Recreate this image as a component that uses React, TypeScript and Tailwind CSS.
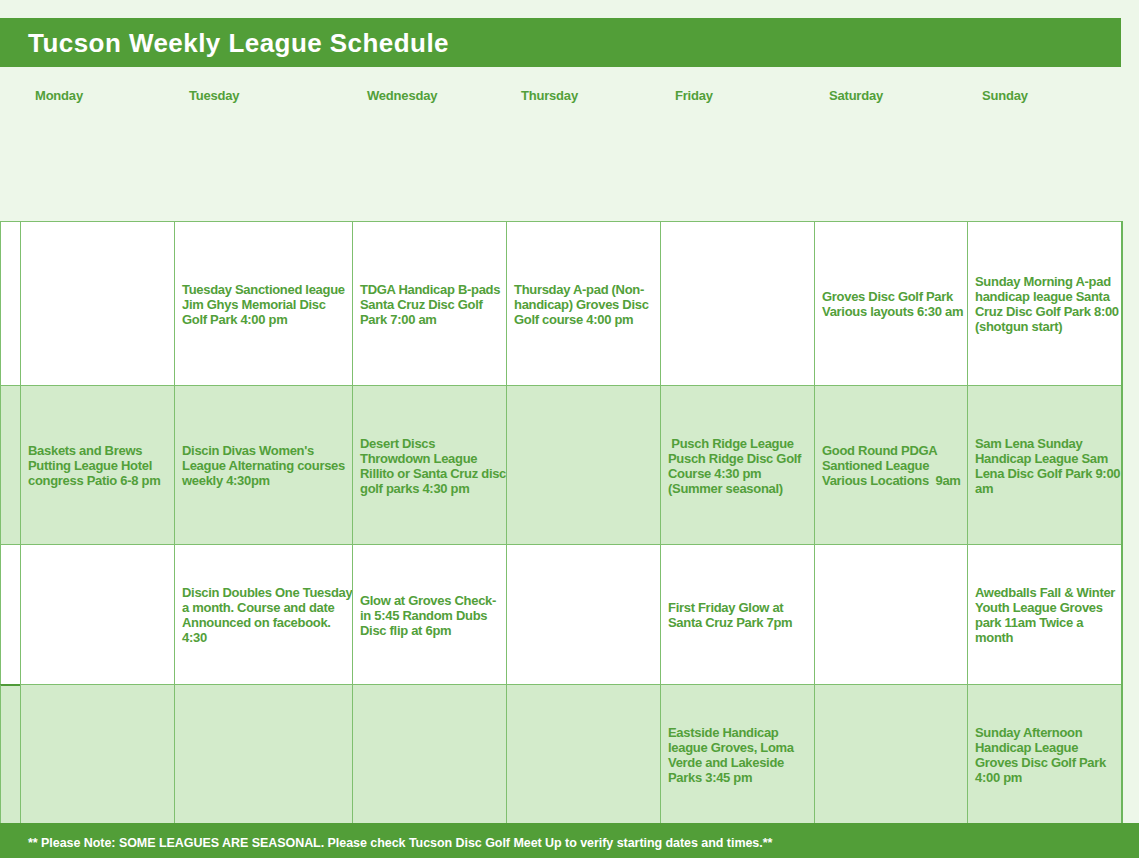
const days = ["Monday", "Tuesday", "Wednesday", "Thursday", "Friday", "Saturday", "Sunday"];

// first column is the narrow blank strip on the left
const rows: { bg: string; h: string; cells: string[] }[] = [
  {
    bg: "bg-white",
    h: "h-[164px]",
    cells: [
      "",
      "",
      "Tuesday Sanctioned league\nJim Ghys Memorial Disc\nGolf Park 4:00 pm",
      "TDGA Handicap B-pads\nSanta Cruz Disc Golf\nPark 7:00 am",
      "Thursday A-pad (Non-\nhandicap) Groves Disc\nGolf course 4:00 pm",
      "",
      "Groves Disc Golf Park\nVarious layouts 6:30 am",
      "Sunday Morning A-pad\nhandicap league Santa\nCruz Disc Golf Park 8:00\n(shotgun start)",
    ],
  },
  {
    bg: "bg-[#d3ebcb]",
    h: "h-[159px]",
    cells: [
      "",
      "Baskets and Brews\nPutting League Hotel\ncongress Patio 6-8 pm",
      "Discin Divas Women's\nLeague Alternating courses\nweekly 4:30pm",
      "Desert Discs\nThrowdown League\nRillito or Santa Cruz disc\ngolf parks 4:30 pm",
      "",
      " Pusch Ridge League\nPusch Ridge Disc Golf\nCourse 4:30 pm\n(Summer seasonal)",
      "Good Round PDGA\nSantioned League\nVarious Locations  9am",
      "Sam Lena Sunday\nHandicap League Sam\nLena Disc Golf Park 9:00\nam",
    ],
  },
  {
    bg: "bg-white",
    h: "h-[140px]",
    cells: [
      "",
      "",
      "Discin Doubles One Tuesday\na month. Course and date\nAnnounced on facebook.\n4:30",
      "Glow at Groves Check-\nin 5:45 Random Dubs\nDisc flip at 6pm",
      "",
      "First Friday Glow at\nSanta Cruz Park 7pm",
      "",
      "Awedballs Fall & Winter\nYouth League Groves\npark 11am Twice a\nmonth",
    ],
  },
  {
    bg: "bg-[#d3ebcb]",
    h: "h-[139px]",
    cells: [
      "",
      "",
      "",
      "",
      "",
      "Eastside Handicap\nleague Groves, Loma\nVerde and Lakeside\nParks 3:45 pm",
      "",
      "Sunday Afternoon\nHandicap League\nGroves Disc Golf Park\n4:00 pm",
    ],
  },
];

const cols = "grid grid-cols-[20px_154px_178px_154px_154px_154px_153px_154px]";

export default function App() {
  return (
    <div
      className="w-[1139px] h-[858px] bg-[#edf7e9] flex flex-col overflow-hidden"
      style={{ fontFamily: '"Liberation Sans", Arial, sans-serif' }}
    >
      <div className="h-[18px]" />

      {/* Title bar */}
      <div className="w-[1121px] h-[49px] bg-[#529e38] flex items-center pl-[28px]">
        <h1 className="text-white font-bold text-[26px] tracking-[0.45px] leading-none">
          Tucson Weekly League Schedule
        </h1>
      </div>

      {/* Day headers */}
      <div className={`${cols} h-[154px]`}>
        <div />
        {days.map((d) => (
          <div
            key={d}
            className="pl-[15px] pt-[21px] text-[13px] leading-[15px] font-bold text-[#52a03a] tracking-[-0.2px]"
          >
            {d}
          </div>
        ))}
      </div>

      {/* Schedule grid */}
      <div className="w-[1123px] border-r-2 border-[#6cb55c]">
        {rows.map((row, ri) => (
          <div key={ri} className={`${cols} ${row.h} ${row.bg}`}>
            {row.cells.map((c, ci) => (
              <div
                key={ci}
                className={`border-l border-t border-[#7fbf6f] flex items-center pl-[7px] pt-px ${
                  ri === 3 && ci === 0 ? "border-t-2 border-t-[#4f9a38]" : ""
                }`}
              >
                <span className="whitespace-pre text-[13px] leading-[15px] font-bold text-[#52a03a] tracking-[-0.3px]">
                  {c}
                </span>
              </div>
            ))}
          </div>
        ))}
      </div>

      {/* Footer note */}
      <div className="h-[35px] bg-[#529e38] flex items-center pl-[28px] pt-[5px]">
        <p className="text-white font-bold text-[12.5px] leading-none whitespace-pre tracking-[-0.05px]">
          ** Please Note: SOME LEAGUES ARE SEASONAL. Please check Tucson Disc Golf Meet Up to verify starting dates and times.**
        </p>
      </div>
    </div>
  );
}
